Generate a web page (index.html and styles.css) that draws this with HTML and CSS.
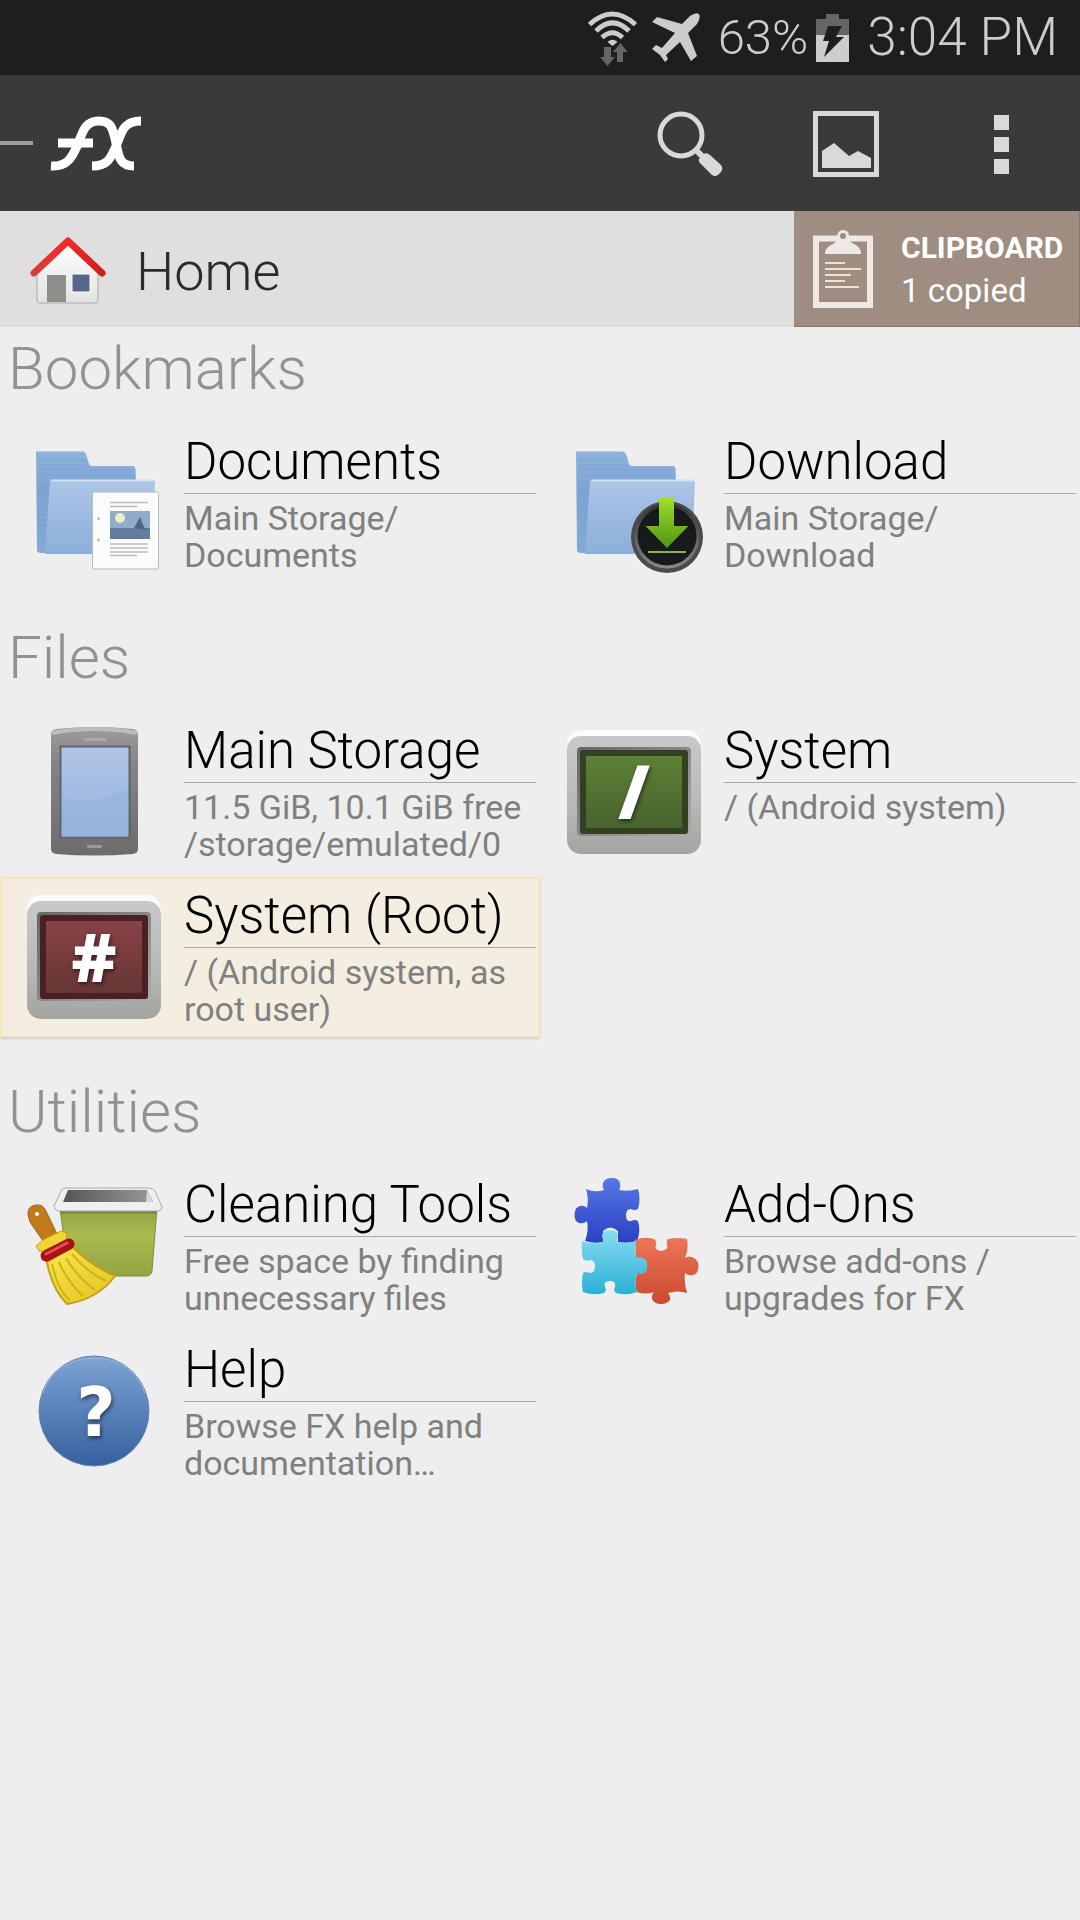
FILE: index.html
```html
<!DOCTYPE html>
<html lang="en">
<head>
<meta charset="utf-8">
<meta name="viewport" content="width=device-width, initial-scale=1">
<title>FX File Explorer</title>
<link rel="stylesheet" href="styles.css">
</head>
<body>
<div class="status-bar">
  <svg class="wifi" width="52" height="56" viewBox="0 0 52 56" aria-hidden="true">
    <g fill="none" stroke="#ccc" stroke-width="5">
      <path d="M2.500 14.500Q25 -6.500 48.500 14.500"/>
      <path d="M9 21Q25.500 4.500 42 21"/>
      <path d="M15 27.500Q25.500 18 35.500 27.500"/>
    </g>
    <path d="M20.500 32Q25.500 27.500 30.500 32L25.500 36z" fill="#ccc"/>
    <path d="M17 37h7v10h4l-7.500 9L13 47h4zM30 52V42h-4l7.500-9 7 9H36v10z" fill="#666"/>
  </svg>
  <svg class="plane" width="48" height="50" viewBox="0 0 48 50" aria-hidden="true">
    <path d="M30 11L38 3Q44 -1 47 1Q49 5 45 11L36 20L45 43L39 48L28 29L14 42L16 46L13 49L8 42L0 36L4 32L10 35L23 20L0 9L5 4z" fill="#ccc"/>
  </svg>
  <span class="percent">63%</span>
  <svg class="battery" width="33" height="48" viewBox="0 0 33 48" aria-hidden="true">
    <path d="M0 5h10V0h13v5h10v16H0z" fill="#666"/>
    <path d="M0 21h33v27H0z" fill="#ccc"/>
    <path d="M12 12h14l-6 11h8L8 43l5-16H7z" fill="#1e1e1e"/>
  </svg>
  <time class="clock">3:04 PM</time>
</div>

<header class="app-bar">
  <button class="brand" aria-label="FX menu">
    <svg width="144" height="60" viewBox="0 0 144 60" aria-hidden="true">
      <path d="M0 29h33" stroke="#a0a0a0" stroke-width="4"/>
      <g fill="none" stroke="#fff" stroke-width="9">
        <path d="M51 52C68 53 72 43 78 30C83 16 86 7 99 7C112 7 113 16 116 29C119 44 120 52 134 52M58 29H93M92 52C108 52 111 44 117 30C122 17 124 7 141 7"/>
      </g>
    </svg>
  </button>
  <div class="actions">
    <button class="action" aria-label="Search">
      <svg width="66" height="66" viewBox="0 0 66 66" aria-hidden="true">
        <circle cx="24" cy="24" r="21" fill="none" stroke="#d9d9d9" stroke-width="5"/>
        <path d="M38 38l8 8" stroke="#d9d9d9" stroke-width="6"/>
        <path d="M42 48L46 43Q50 41 53 44L64 54Q67 58 63 62Q59 67 55 64L43 52Q41 50 42 48z" fill="#d9d9d9"/>
      </svg>
    </button>
    <button class="action" aria-label="Images">
      <svg width="66" height="66" viewBox="0 0 66 66" aria-hidden="true">
        <path d="M2.500 2.500h61v61h-61z" fill="none" stroke="#d9d9d9" stroke-width="5"/>
        <path d="M9 57V40l12-8 15 13 9-5 13 7v10z" fill="#d9d9d9"/>
      </svg>
    </button>
    <button class="action" aria-label="More options">
      <svg width="16" height="60" viewBox="0 0 16 60" aria-hidden="true">
        <path d="M0 1h15v15H0zM0 23h15v15H0zM0 45h15v15H0z" fill="#d9d9d9"/>
      </svg>
    </button>
  </div>
</header>

<nav class="location">
  <a class="home" href="#home">
    <svg width="78" height="70" viewBox="0 0 78 70" aria-hidden="true">
      <defs>
        <linearGradient id="wall" x1="0" y1="0" x2="0" y2="1"><stop offset="0" stop-color="#fff"/><stop offset="1" stop-color="#e2e2e2"/></linearGradient>
        <linearGradient id="roof" x1="0" y1="0" x2="1" y2="0"><stop offset="0" stop-color="#d83c3c"/><stop offset=".5" stop-color="#f02a2a"/><stop offset="1" stop-color="#d21c20"/></linearGradient>
      </defs>
      <path d="M8 34L39 7L69 34V64Q69 67 66 67H11Q8 67 8 64z" fill="url(#wall)" stroke="#aaa"/>
      <path d="M18 39h19v27H18z" fill="#8c8f8a"/>
      <path d="M43 38h18v18H43z" fill="#56688a" stroke="#fff" stroke-width="1"/>
      <path d="M5 37L39 5L73 37" fill="none" stroke="url(#roof)" stroke-width="7" stroke-linecap="round" stroke-linejoin="round"/>
    </svg>
    <span>Home</span>
  </a>
  <button class="clipboard">
    <svg width="60" height="79" viewBox="0 0 60 79" aria-hidden="true">
      <path d="M3 9.500h54v66.500H3z" fill="none" stroke="#eee9e5" stroke-width="6"/>
      <path d="M12 25Q12 18 20 15Q24 13 24 7Q25 1 30 1Q36 1 36 7Q36 13 41 15Q48 18 48 25z" fill="#eee9e5"/>
      <circle cx="30" cy="7" r="3" fill="#9e8d80"/>
      <path d="M12 34h20M12 40h36M12 46h26M12 52h20M12 58h34" stroke="#eee3d8" stroke-width="2"/>
    </svg>
    <span class="clipboard-text"><strong>CLIPBOARD</strong><span>1 copied</span></span>
  </button>
</nav>

<main>
  <svg class="defs" width="0" height="0" aria-hidden="true">
    <defs>
      <linearGradient id="folder-back" x1="0" y1="0" x2="0" y2="1"><stop offset="0" stop-color="#8db2de"/><stop offset=".4" stop-color="#7da4d3"/><stop offset="1" stop-color="#83aad6"/></linearGradient>
      <linearGradient id="folder-front" x1="0" y1="0" x2="0" y2="1"><stop offset="0" stop-color="#adc6e7"/><stop offset="1" stop-color="#8caedb"/></linearGradient>
      <linearGradient id="frame" x1="0" y1="0" x2="0" y2="1"><stop offset="0" stop-color="#c9c9c9"/><stop offset=".6" stop-color="#b7b7b7"/><stop offset="1" stop-color="#a3a49f"/></linearGradient>
      <linearGradient id="bezel" x1="0" y1="0" x2="1" y2="1"><stop offset="0" stop-color="#666"/><stop offset="1" stop-color="#aaa"/></linearGradient>
      <linearGradient id="green" x1="0" y1="0" x2="0" y2="1"><stop offset="0" stop-color="#5d8136"/><stop offset="1" stop-color="#47632f"/></linearGradient>
      <linearGradient id="red" x1="0" y1="0" x2="0" y2="1"><stop offset="0" stop-color="#8a4246"/><stop offset="1" stop-color="#663636"/></linearGradient>
      <linearGradient id="phone" x1="0" y1="0" x2="0" y2="1"><stop offset="0" stop-color="#9c9c9c"/><stop offset=".3" stop-color="#848484"/><stop offset="1" stop-color="#6b6c6b"/></linearGradient>
      <linearGradient id="screen" x1="0" y1="0" x2="0" y2="1"><stop offset="0" stop-color="#aec3e6"/><stop offset="1" stop-color="#9ab6de"/></linearGradient>
      <linearGradient id="ring" x1="0" y1="0" x2="0" y2="1"><stop offset="0" stop-color="#333"/><stop offset="1" stop-color="#888"/></linearGradient>
      <linearGradient id="arrow" x1="0" y1="0" x2="0" y2="1"><stop offset="0" stop-color="#a2e02b"/><stop offset="1" stop-color="#4f9416"/></linearGradient>
      <linearGradient id="bin" x1="0" y1="0" x2="0" y2="1"><stop offset="0" stop-color="#93a343"/><stop offset=".4" stop-color="#a9ba4f"/><stop offset="1" stop-color="#94a541"/></linearGradient>
      <linearGradient id="bin-hole" x1="0" y1="0" x2="1" y2="0"><stop offset="0" stop-color="#555"/><stop offset="1" stop-color="#999"/></linearGradient>
      <linearGradient id="broom" x1="0" y1="0" x2="1" y2="1"><stop offset="0" stop-color="#f9e64d"/><stop offset="1" stop-color="#e2c31d"/></linearGradient>
      <linearGradient id="help" x1="0" y1="0" x2="0" y2="1"><stop offset="0" stop-color="#7ea4d4"/><stop offset="1" stop-color="#365f9e"/></linearGradient>
      <linearGradient id="piece-blue" x1="0" y1="0" x2="0" y2="1"><stop offset="0" stop-color="#5878e6"/><stop offset="1" stop-color="#2a40c0"/></linearGradient>
      <linearGradient id="piece-cyan" x1="0" y1="0" x2="0" y2="1"><stop offset="0" stop-color="#8adcf2"/><stop offset="1" stop-color="#2bb0d6"/></linearGradient>
      <linearGradient id="piece-red" x1="0" y1="0" x2="0" y2="1"><stop offset="0" stop-color="#ec7558"/><stop offset="1" stop-color="#cc4a30"/></linearGradient>
      <symbol id="folder" viewBox="0 0 184 165">
        <path d="M36 28.500H83Q85 28.500 86 31L89 41Q90 43 92 43H133Q135 43 135.500 46L136 60L60 130H41Q37 130 37 127z" fill="url(#folder-back)"/>
        <path d="M38 37h46M38 42h48M38 47h96M38 52h96M38 62h12M38 67h12M38 72h11M38 77h11M38 82h11M38 87h10M38 92h10M38 97h10M38 102h10M38 107h9M38 112h9M38 117h9" stroke="#6f97c9" opacity=".4"/>
        <path d="M50 58Q50 57 52 57H153Q155 57 155 59L152 127Q152 131 148 131H45z" fill="url(#folder-front)"/>
        <path d="M51 57.500H154" stroke="#cfdef2" stroke-width="2"/>
      </symbol>
      <symbol id="monitor" viewBox="0 0 184 165">
        <rect x="27" y="18" width="134" height="60" rx="14" fill="#fbfbfb"/>
        <rect x="27" y="24" width="134" height="118" rx="14" fill="url(#frame)"/>
        <rect x="37" y="35" width="114" height="89" rx="4" fill="url(#bezel)"/>
      </symbol>
    </defs>
  </svg>

  <section class="group">
    <h2>Bookmarks</h2>
    <div class="items">
      <a class="item" href="#documents">
        <svg class="icon" viewBox="0 0 184 160" aria-hidden="true">
          <use href="#folder" width="184" height="165"/>
          <rect x="92.500" y="69" width="66" height="77" rx="2" fill="#fbfbfb" stroke="#b9b9b9"/>
          <path d="M110 79.500h38M110 83.500h27M110 121h38M110 125h38M110 129h38M110 132.500h27" stroke="#bdbdbd" stroke-width="1.500"/>
          <path d="M110 88h40v28h-40z" fill="#8facca"/><path d="M110 105h40v11h-40z" fill="#637c9f"/>
          <circle cx="120" cy="95" r="5" fill="#e9f0c4"/>
          <path d="M134 105L140 94L144 104L148 107z" fill="#52677f"/>
          <circle cx="98.500" cy="95.500" r="1.500" fill="#bbb"/><circle cx="98.500" cy="117" r="1.500" fill="#bbb"/>
        </svg>
        <div class="item-text"><h3>Documents</h3><p>Main Storage/<br>Documents</p></div>
      </a>
      <a class="item" href="#download">
        <svg class="icon" viewBox="0 0 184 160" aria-hidden="true">
          <use href="#folder" width="184" height="165"/>
          <circle cx="127" cy="114" r="36" fill="#494b4d"/>
          <circle cx="127" cy="113" r="31" fill="#171a1b" stroke="url(#ring)" stroke-width="3"/>
          <path d="M119 74h15v29h14.500L127 125 105.500 103H119z" fill="url(#arrow)"/>
          <path d="M108 129h38" stroke="#8cb340" stroke-width="2"/>
        </svg>
        <div class="item-text"><h3>Download</h3><p>Main Storage/<br>Download</p></div>
      </a>
    </div>
  </section>

  <section class="group">
    <h2>Files</h2>
    <div class="items">
      <a class="item" href="#storage">
        <svg class="icon" viewBox="0 0 184 160" aria-hidden="true">
          <path d="M51 22Q51 18 56 17Q94 13 133 17Q138 18 138 22V137Q138 141 133 142Q94 145 56 142Q51 141 51 137z" fill="url(#phone)"/>
          <path d="M52 21Q94 13 137 21" fill="none" stroke="#bcbcbc" stroke-width="4"/>
          <rect x="60.500" y="34.500" width="69" height="91" fill="url(#screen)" stroke="#5f646c" stroke-width="2"/>
          <path d="M62 86Q95 95 128 76V125H62z" fill="#8fafd8" opacity=".5"/>
          <rect x="84" y="26" width="22" height="3" rx="1" fill="#aaa"/><rect x="87" y="133" width="15" height="3" rx="1" fill="#999"/>
        </svg>
        <div class="item-text"><h3>Main Storage</h3><p>11.5 GiB, 10.1 GiB free<br>/storage/emulated/0</p></div>
      </a>
      <a class="item" href="#system">
        <svg class="icon" viewBox="0 0 184 160" aria-hidden="true">
          <use href="#monitor" width="184" height="165"/>
          <rect x="40" y="38" width="108" height="84" rx="3" fill="#334022"/>
          <rect x="46" y="44" width="96" height="72" fill="url(#green)"/>
          <text class="glyph slash" x="94" y="106" text-anchor="middle">/</text>
        </svg>
        <div class="item-text"><h3>System</h3><p>/ (Android system)</p></div>
      </a>
      <a class="item selected" href="#root">
        <svg class="icon" viewBox="0 0 184 160" aria-hidden="true">
          <use href="#monitor" width="184" height="165"/>
          <rect x="40" y="38" width="108" height="84" rx="3" fill="#4a2122"/>
          <rect x="46" y="44" width="96" height="72" fill="url(#red)"/>
          <text class="glyph hash" x="94" y="105" text-anchor="middle">#</text>
        </svg>
        <div class="item-text"><h3>System (Root)</h3><p>/ (Android system, as<br>root user)</p></div>
      </a>
    </div>
  </section>

  <section class="group">
    <h2>Utilities</h2>
    <div class="items">
      <a class="item" href="#cleaning">
        <svg class="icon" viewBox="0 0 184 160" aria-hidden="true">
          <path d="M60 42H157L152 105Q151 110 146 110H75Q69 110 68 104z" fill="url(#bin)" stroke="#7f8c3b"/>
          <path d="M60 46H157" stroke="#77863a" stroke-width="3"/>
          <path d="M62 23Q63 22 66 22H149Q153 22 155 25L162 41Q162 45 158 45H58Q54 44 54 40z" fill="#eef0f0" stroke="#a9a9a9"/>
          <path d="M68 24H147L153 35Q153 36 151 36H63z" fill="url(#bin-hole)"/>
          <path d="M147 24L153 36H146z" fill="#d8d8d8"/>
          <path d="M28 49Q27 40 36 39Q43 38 46 45L57 68L43 75L30 56z" fill="#c07a1a" stroke="#a7671a"/>
          <circle cx="37" cy="48" r="2" fill="#fff"/>
          <path d="M36 80L43 74L61 65L67 67L66 74L40 86z" fill="#f0d535" stroke="#c49e1c"/>
          <path d="M47 96L73 81Q90 99 115 110Q98 133 67 138Q52 123 47 96z" fill="url(#broom)" stroke="#c2a117" stroke-width="2"/>
          <path d="M52 98Q58 125 70 134M59 96Q67 115 83 130M66 92Q78 112 95 124M72 88Q87 106 106 115" fill="none" stroke="#d3b01d" stroke-width="2"/>
          <path d="M46 90L69 78" stroke="#a91212" stroke-width="11" stroke-linecap="round"/><path d="M46 88L67 77" stroke="#e0504c" stroke-width="3" stroke-linecap="round"/>
        </svg>
        <div class="item-text"><h3>Cleaning Tools</h3><p>Free space by finding<br>unnecessary files</p></div>
      </a>
      <a class="item" href="#addons">
        <svg class="icon" viewBox="0 0 184 160" aria-hidden="true">
          <path d="M46 23Q55 27 64 24Q62 21 63 17Q65 12 71.500 12Q79 12 80 17Q81 21 79 24Q88 26 98 23Q101 33 98 43Q94 45 91 43Q86 43 86 49Q86 56 91 55Q95 53 98 55Q101 65 97 75Q88 78 78 76V65Q70 58 63 65V76Q54 78 45 75Q49 65 47 55Q44 58 39 57Q34 55 34.500 48Q35 41 40 40Q44 39 47 42Q49 33 46 23z" fill="url(#piece-blue)"/>
          <path d="M95 74Q104 70 114 73Q117 75 116 79Q114 84 121 85Q129 84 127 79Q126 75 128 73Q138 71 147 73Q149 83 145 92Q149 89 154 92Q159 95 158.500 101Q158 108 153 109Q148 110 145 107Q144 117 147 127Q138 124 128 127Q131 130 130 134Q127 138 121 138Q114 138 112 133Q111 129 114 126Q105 129 97 126Q94 117 97 108z" fill="url(#piece-red)"/>
          <path d="M42 75Q53 79 63 76Q63 73 62 70Q62 64 70 64Q78 64 78 70Q77 73 77 76Q87 78 96 75Q94 84 97 92Q102 90 106 94Q108 97 107 103Q104 110 97 107Q94 117 97 126Q87 130 76 127Q73 125 75 121Q76 115 70 115Q63 115 65 121Q67 125 64 127Q54 130 43 126Q41 117 43 107Q46 105 50 107Q55 107 55 100Q55 94 50 94Q46 96 43 93Q41 84 42 75z" fill="url(#piece-cyan)"/>
        </svg>
        <div class="item-text"><h3>Add-Ons</h3><p>Browse add-ons /<br>upgrades for FX</p></div>
      </a>
      <a class="item" href="#help">
        <svg class="icon" viewBox="0 0 184 160" aria-hidden="true">
          <circle cx="94" cy="80" r="55" fill="url(#help)" stroke="#6585b4"/>
          <path d="M43 62Q55 28 94 27Q133 28 145 62" fill="none" stroke="#9ab5d8" stroke-width="1"/>
          <text class="glyph question" x="96" y="105" text-anchor="middle">?</text>
        </svg>
        <div class="item-text"><h3>Help</h3><p>Browse FX help and<br>documentation…</p></div>
      </a>
    </div>
  </section>
</main>
</body>
</html>
```
FILE: styles.css
```css
* {
  box-sizing: border-box;
}

body {
  margin: 0;
  min-height: 100vh;
  background: #eee;
  font-family: Roboto, "Liberation Sans", sans-serif;
  font-weight: 300;
}

button {
  margin: 0;
  padding: 0;
  border: 0;
  background: none;
  color: inherit;
  font: inherit;
  text-align: left;
}

a {
  color: inherit;
  text-decoration: none;
}

svg {
  display: block;
  flex: none;
}

h2,
h3,
p {
  margin: 0;
  font-weight: 300;
}

.defs {
  position: absolute;
}

/* System status bar */
.status-bar {
  display: flex;
  justify-content: flex-end;
  align-items: center;
  min-height: 75px;
  padding-right: 22px;
  background: #1e1e1e;
  color: #ccc;
  line-height: 75px;
}

.plane {
  margin-left: 13px;
}

.percent {
  margin-left: 18px;
  font-size: 49px;
}

.battery {
  margin-left: 8px;
}

.clock {
  margin-left: 18px;
  font-size: 53px;
}

/* Application bar */
.app-bar {
  display: flex;
  justify-content: space-between;
  height: 136px;
  padding-top: 1px;
  background: #3a3a3a;
}

.brand,
.actions {
  display: flex;
  align-items: center;
}

.action {
  display: flex;
  align-items: center;
  justify-content: center;
  width: 156px;
  height: 100%;
}

/* Location and clipboard */
.location {
  display: flex;
  min-height: 116px;
  background: #dfdfdf;
}

.home {
  display: flex;
  flex: 1;
  align-items: center;
  gap: 29px;
  padding: 4px 0 0 29px;
  color: #2b2b2b;
  font-size: 54px;
}

.clipboard {
  display: flex;
  align-items: center;
  gap: 28px;
  width: 286px;
  padding-left: 19px;
  border: 1px solid #857a72;
  border-width: 0 1px 1px 0;
  background: #9e8d80;
  color: #fff;
}

.clipboard-text {
  display: flex;
  flex-direction: column;
  font-size: 33px;
  font-weight: 400;
  line-height: 43px;
}

.clipboard-text strong {
  font-size: 30px;
  font-weight: 700;
}

/* Item groups */
.group + .group {
  margin-top: 32px;
}

.group h2 {
  padding: 7px 8px 19px;
  color: #929292;
  font-size: 60px;
  line-height: 70px;
}

.group + .group h2 {
  padding-top: 8px;
}

.items {
  display: grid;
  grid-template-columns: 1fr 1fr;
  row-gap: 5px;
}

.item {
  display: flex;
  min-height: 160px;
}

.item.selected {
  background: #f4eee0;
  box-shadow: inset 0 0 0 2px #f8e6b8, 0 2px 3px #0002;
}

.icon {
  width: 184px;
  height: 160px;
}

.item-text {
  flex: 1;
  min-width: 0;
  padding: 9px 4px 0 0;
}

.item h3 {
  padding-bottom: 1px;
  border-bottom: 1px solid #aaa;
  color: #000;
  font-size: 51px;
  line-height: 60px;
  white-space: nowrap;
}

.item p {
  padding-top: 6px;
  color: #808080;
  font-size: 34px;
  font-weight: 400;
  line-height: 37px;
  white-space: nowrap;
}

.glyph {
  fill: #fff;
  font-family: "Open Sans", "DejaVu Sans", sans-serif;
  font-size: 68px;
  font-weight: 800;
  filter: drop-shadow(1px 2px 2px #0009);
}

.slash {
  font-size: 72px;
}

.question {
  font-family: "DejaVu Sans", sans-serif;
}
```
